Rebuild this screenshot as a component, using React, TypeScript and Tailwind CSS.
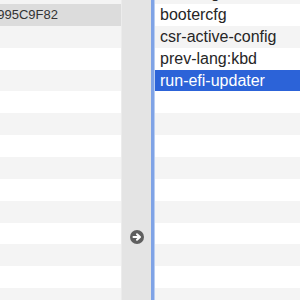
import React from "react";

const ROW_H = "h-[21.86px]";

function Row({ i, children, selected, selColor }: { i: number; children?: React.ReactNode; selected?: boolean; selColor?: string }) {
  const stripe = i % 2 === 0 ? "bg-[#f4f4f4]" : "bg-white";
  return (
    <div className={`${ROW_H} shrink-0 flex items-center ${selected ? selColor : stripe}`}>{children}</div>
  );
}

export default function App() {
  const rows = Array.from({ length: 15 }, (_, i) => i);
  const right = ["boot-args", "bootercfg", "csr-active-config", "prev-lang:kbd", "run-efi-updater"];
  return (
    <div className="w-[300px] h-[300px] overflow-hidden flex bg-white" style={{ fontFamily: '"Liberation Sans", Arial, sans-serif' }}>
      {/* left list */}
      <div className="w-[121px] shrink-0 flex flex-col mt-[-17.86px]">
        {rows.map((i) =>
          i === 1 ? (
            <Row key={i} i={i} selected selColor="bg-[#dcdcdc]">
              <div className="w-[58px] overflow-hidden flex justify-end whitespace-nowrap text-[13px] text-[#333333]">
                <span className="shrink-0">7C436110-AB2A-4BBB-A880-FE41995C9F82</span>
              </div>
            </Row>
          ) : (
            <Row key={i} i={i} />
          )
        )}
      </div>
      {/* middle divider column */}
      <div className="w-[30px] shrink-0 bg-[#e4e4e4] border-l border-[#ececec] flex items-start justify-center">
        <div className="mt-[230px] w-[14px] h-[14px]">
          <svg width="14" height="14" viewBox="0 0 14 14">
            <circle cx="7" cy="7" r="7" fill="#5f5f5f" />
            <path d="M3.5 7 H9" stroke="#fff" strokeWidth="2" strokeLinecap="round" />
            <path d="M7 4.2 L10 7 L7 9.8" stroke="#fff" strokeWidth="2" fill="none" strokeLinecap="round" strokeLinejoin="round" />
          </svg>
        </div>
      </div>
      {/* focus ring */}
      <div className="w-[3px] shrink-0 bg-[#7fa3e6]" />
      <div className="w-[1px] shrink-0 bg-[#b9cdf0]" />
      {/* right list */}
      <div className="flex-1 flex flex-col mt-[-17.86px]">
        {rows.map((i) => {
          const label = right[i];
          const sel = i === 4;
          return (
            <Row key={i} i={i} selected={sel} selColor="bg-[#2c63d8]">
              {label && (
                <span className={`pl-[5px] text-[16px] whitespace-nowrap ${sel ? "text-white" : "text-[#262626]"}`}>{label}</span>
              )}
            </Row>
          );
        })}
      </div>
    </div>
  );
}
